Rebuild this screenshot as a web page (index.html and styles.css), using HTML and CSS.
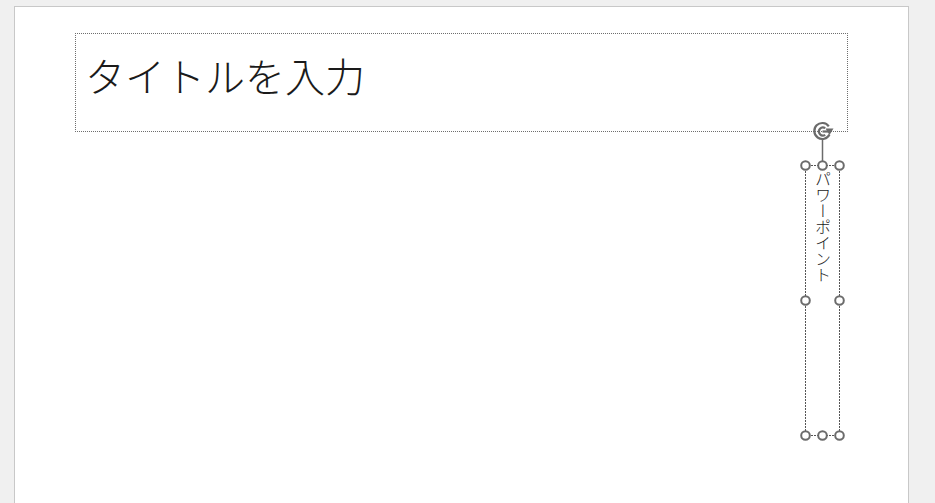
FILE: index.html
```html
<!DOCTYPE html>
<html lang="ja">
<head>
<meta charset="utf-8">
<title>スライド</title>
<link rel="stylesheet" href="styles.css">
</head>
<body>
<div class="workspace">
  <div class="slide">
    <div class="title-box">
      <div class="title-text">タイトルを入力</div>
    </div>
    <div class="vtext">パワーポイント</div>
    <svg class="selection" width="60" height="335" viewBox="0 0 60 335">
      <g fill="none" stroke="#555" stroke-width="1" stroke-dasharray="2 1">
        <line x1="10.5" y1="50" x2="10.5" y2="320"/>
        <line x1="44.5" y1="50" x2="44.5" y2="320"/>
        <line x1="10" y1="50.5" x2="44" y2="50.5"/>
        <line x1="10" y1="320.5" x2="44" y2="320.5"/>
      </g>
      <line x1="27.5" y1="24" x2="27.5" y2="46" stroke="#6b6b6b" stroke-width="1.5"/>
      <g fill="none" stroke="#6b6b6b" stroke-width="2.2" stroke-linecap="butt">
        <path d="M33.8 11.3 A8 8 0 1 0 34.5 19.5"/>
        <path d="M30.2 13.2 A4 4 0 1 0 30.2 19.8"/>
        <path d="M27.5 16.5 L33 16.5"/>
      </g>
      <path d="M30.5 13.5 L38.5 13.5 L34.5 20 Z" fill="#6b6b6b"/>
      <g fill="#fff" stroke="#6b6b6b" stroke-width="2">
        <circle cx="10.5" cy="50.5" r="4.3"/>
        <circle cx="27.5" cy="50.5" r="4.3"/>
        <circle cx="44.5" cy="50.5" r="4.3"/>
        <circle cx="10.5" cy="185.5" r="4.3"/>
        <circle cx="44.5" cy="185.5" r="4.3"/>
        <circle cx="10.5" cy="320.5" r="4.3"/>
        <circle cx="27.5" cy="320.5" r="4.3"/>
        <circle cx="44.5" cy="320.5" r="4.3"/>
      </g>
    </svg>
  </div>
</div>
</body>
</html>
```
FILE: styles.css
```css
html, body {
  margin: 0;
  padding: 0;
  background: #f0f0f0;
  overflow: hidden;
}
.workspace {
  width: 935px;
  height: 503px;
  padding: 6px 0 0 14px;
  box-sizing: border-box;
}
.slide {
  position: relative;
  width: 895px;
  height: 520px;
  box-sizing: border-box;
  background: #fff;
  border: 1px solid #c8c8c8;
  padding: 26px 0 0 60px;
}
.title-box {
  width: 773px;
  height: 99px;
  box-sizing: border-box;
  border: 1px dotted #6e6e6e;
  padding: 21px 0 0 9px;
}
.title-text {
  font-family: "Noto Sans CJK JP", "Noto Sans", sans-serif;
  font-weight: 300;
  font-size: 40px;
  line-height: 40px;
  color: #1a1a1a;
  white-space: nowrap;
}
.vtext {
  position: absolute;
  left: 790px;
  top: 158px;
  width: 35px;
  height: 271px;
  box-sizing: border-box;
  padding-top: 6px;
  writing-mode: vertical-rl;
  font-family: "Noto Sans CJK JP", "Noto Sans", sans-serif;
  font-weight: 300;
  font-size: 16px;
  line-height: 35px;
  color: #1a1a1a;
}
.selection {
  position: absolute;
  left: 780px;
  top: 108px;
}
```
